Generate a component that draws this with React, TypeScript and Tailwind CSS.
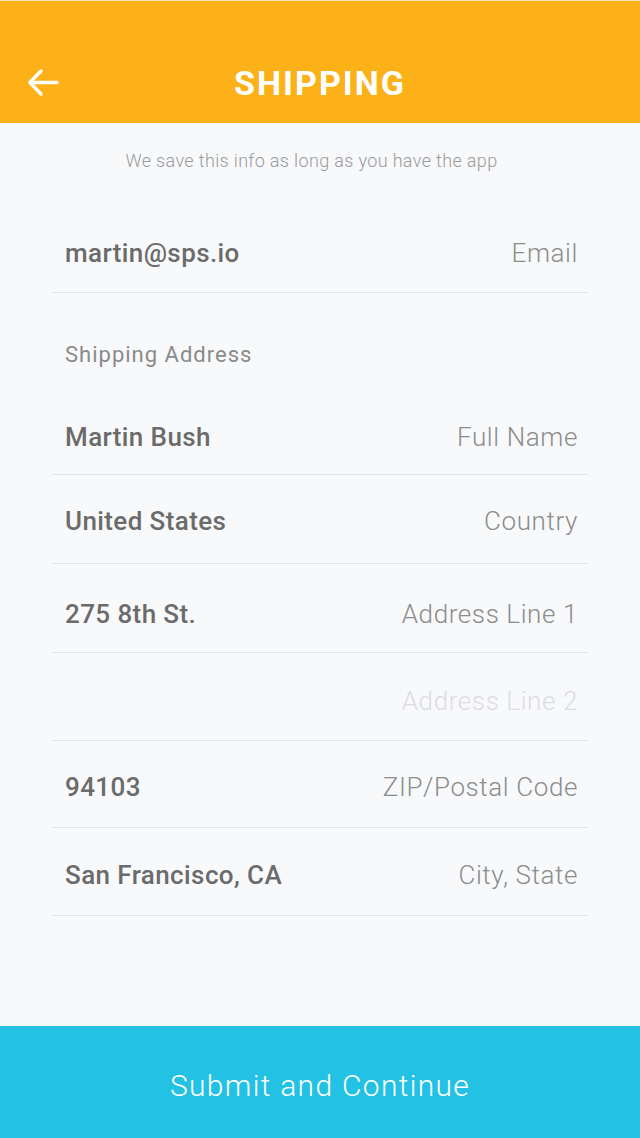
import React from "react";

const font = { fontFamily: "Roboto, 'Noto Sans', sans-serif" };

function Row({ value, label, faint, pt, pb }: { value?: string; label: string; faint?: boolean; pt: number; pb: number }) {
  return (
    <div
      className="border-b border-[#e1e3e6] flex items-center justify-between pl-[13px] pr-[10px] leading-[32px]"
      style={{ paddingTop: pt, paddingBottom: pb }}
    >
      <span className="text-[26px] font-medium text-[#6b6b6b] tracking-[0.4px]">{value}</span>
      <span className={`text-[26px] font-light tracking-[0.6px] ${faint ? "text-[#dcdde0]" : "text-[#8c8c8c]"}`}>{label}</span>
    </div>
  );
}

export default function App() {
  return (
    <div className="w-[640px] h-[1138px] bg-[#f8f9fb] flex flex-col" style={font}>
      <div className="h-[123px] bg-[#fdb119] border-t border-[#fde7b8] relative flex items-center justify-center shrink-0">
        <svg className="absolute left-[24px] top-[64px]" width="40" height="36" viewBox="0 0 40 36" fill="none" stroke="white" strokeWidth="3.4" strokeLinecap="round" strokeLinejoin="round">
          <path d="M33 17.5H6" />
          <path d="M17 6L6 17.5 17 29" />
        </svg>
        <span className="text-white text-[34px] font-bold tracking-[2px] mt-[42px]">SHIPPING</span>
      </div>
      <div className="text-center text-[18px] leading-[24px] font-light text-[#9a9a9a] mt-[26px] pr-[17px] tracking-[0.35px]">
        We save this info as long as you have the app
      </div>
      <div className="mx-[52px] flex-1 flex flex-col">
        <div className="border-b border-[#e1e3e6] flex items-center justify-between pl-[13px] pr-[10px] pt-[64px] pb-[23px] leading-[32px]">
          <span className="text-[26px] font-medium text-[#6b6b6b] tracking-[0.4px]">martin@sps.io</span>
          <span className="text-[26px] font-light text-[#8c8c8c] tracking-[0.6px]">Email</span>
        </div>
        <div className="px-[13px] mt-[48px] text-[22px] leading-[28px] text-[#8a8a8a] tracking-[1px]">Shipping Address</div>
        <Row value="Martin Bush" label="Full Name" pt={52} pb={21} />
        <Row value="United States" label="Country" pt={30} pb={26} />
        <Row value="275 8th St." label="Address Line 1" pt={34} pb={22} />
        <Row label="Address Line 2" faint pt={32} pb={23} />
        <Row value="94103" label="ZIP/Postal Code" pt={30} pb={24} />
        <Row value="San Francisco, CA" label="City, State" pt={31} pb={24} />
      </div>
      <button className="h-[112px] bg-[#23c1e3] text-white text-[30px] font-light tracking-[1.3px] pt-[6px] shrink-0">
        Submit and Continue
      </button>
    </div>
  );
}
